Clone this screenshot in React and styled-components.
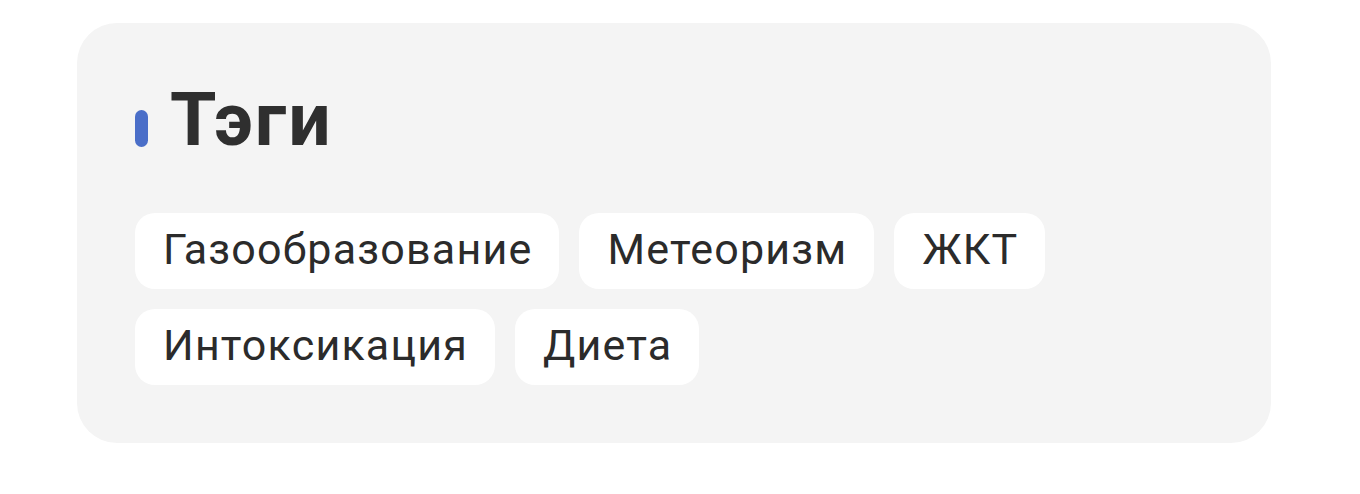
import styled, { createGlobalStyle } from 'styled-components';

const GlobalStyle = createGlobalStyle`
  html, body {
    margin: 0;
    padding: 0;
    background: #ffffff;
  }
  body {
    font-family: Roboto, 'Noto Sans', sans-serif;
  }
`;

const Page = styled.div`
  padding: 23px 89px 0 77px;
`;

const Card = styled.section`
  background: #f4f4f4;
  border-radius: 40px;
  padding: 59px 58px 58px 58px;
  height: 420px;
  box-sizing: border-box;
`;

const Heading = styled.h2`
  display: flex;
  align-items: flex-end;
  gap: 22px;
  margin: 0 0 56px;
  font-size: 75px;
  line-height: 1;
  font-weight: 700;
  color: #2f2f2f;
  letter-spacing: 2px;
`;

const Marker = styled.span`
  flex: none;
  width: 13px;
  height: 37px;
  border-radius: 7px;
  background: #4a6ec8;
  margin-bottom: 10px;
`;

const TagList = styled.ul`
  display: flex;
  flex-wrap: wrap;
  gap: 20px;
  margin: 0;
  padding: 0;
  list-style: none;
`;

const Tag = styled.li`
  display: flex;
  align-items: center;
  height: 76px;
  padding: 0 27px 5px 28px;
  box-sizing: border-box;
  background: #ffffff;
  border-radius: 20px;
  font-size: 43px;
  letter-spacing: 1.2px;
  color: #2b2b2b;
`;

const tags = ['Газообразование', 'Метеоризм', 'ЖКТ', 'Интоксикация', 'Диета'];

export default function App() {
  return (
    <Page>
      <GlobalStyle />
      <Card>
        <Heading>
          <Marker />
          Тэги
        </Heading>
        <TagList>
          {tags.map((t) => (
            <Tag key={t}>{t}</Tag>
          ))}
        </TagList>
      </Card>
    </Page>
  );
}
